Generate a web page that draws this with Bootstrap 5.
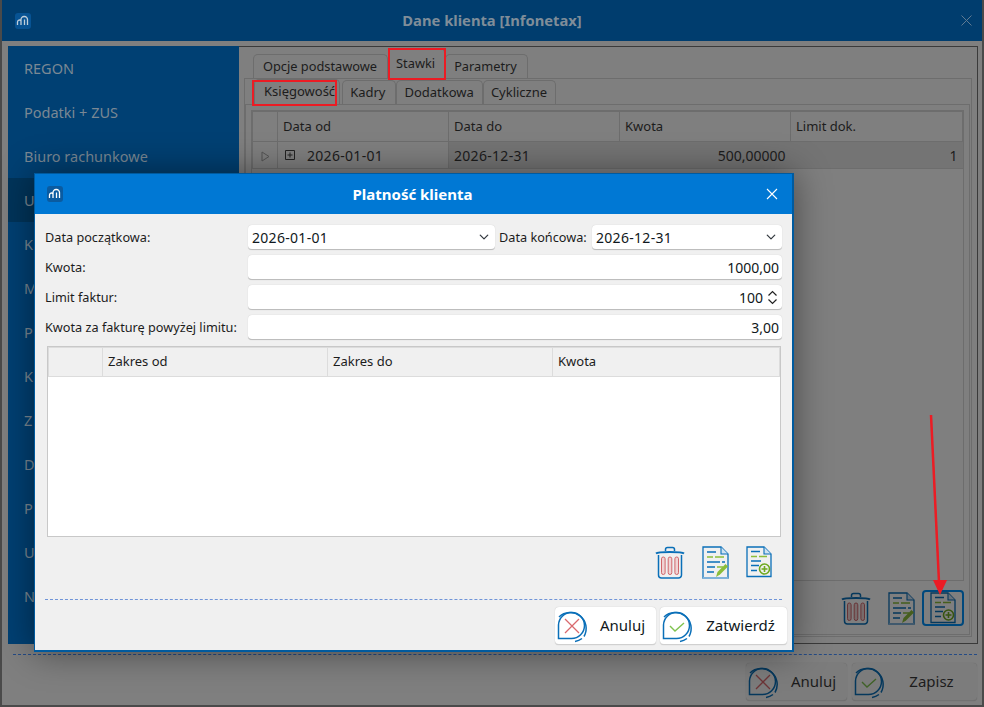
<!DOCTYPE html>
<html lang="pl">
<head>
    <meta charset="UTF-8">
    <meta name="viewport" content="width=device-width, initial-scale=1.0">
    <title>Dane klienta</title>
    <link href="https://cdn.jsdelivr.net/npm/bootstrap@5.3.0/dist/css/bootstrap.min.css" rel="stylesheet">
    <style>
        html, body { height: 100%; }
        body {
            background: #7f7f7f;
            font-family: "Noto Sans", "Open Sans", sans-serif;
            font-size: 13px;
            color: #101820;
            overflow: hidden;
        }
        .app-window {
            position: relative;
            width: 984px;
            height: 707px;
            border-left: 2px solid #4a4a4a;
            border-bottom: 2px solid #4a4a4a;
            border-right: 2px solid #4a4a4a;
            background: #7f7f7f;
            color: #1c1c1c;
        }
        .back-title {
            height: 41px;
            background: #003d6e;
            color: #7f8d99;
            font-size: 14.75px;
            font-weight: 700;
        }
        .logo-box {
            width: 16px;
            height: 16px;
            border-radius: 3px;
            background: #0a5ba0;
        }
        .back-main { height: 598px; margin: 5px 4px 0 6px; }
        .side-list { width: 231px; background: #004073; color: #7a8894; font-size: 14.5px; }
        .side-item { height: 44px; padding: 1px 0 0 16px; }
        .side-item.picked { background: #00345a; }
        .back-panel { flex: 1; border: 1px solid #3a3a3a; border-left: 0; padding: 0 5px 6px 5px; }
        .tab-row { padding-left: 9px; height: 31px; border: 0; align-items: flex-end; font-size: 12.8px; }
        .tab-row .nav-link {
            height: 24px;
            padding: 0 10px 0 9px;
            display: flex;
            align-items: center;
            color: #1c1c1c;
            background: #7f7f7f;
            border: 1px solid #6d6d6d;
            border-bottom: 0;
            border-radius: 5px 5px 0 0;
        }
        .tab-row .nav-link.active { height: 30px; padding: 0 9px 0 7px; margin-left: 0; background: #7f7f7f; color: #1c1c1c; }
        .tab-row .nav-link.next-tab { padding-left: 8px; }
        .tabs-outer { height: 559px; border: 1px solid #6d6d6d; padding: 0 1px 1px 0; }
        .tab-row.inner { height: 25px; padding-left: 9px; font-size: 13px; }
        .tab-row.inner .nav-link { height: 24px; padding: 0 8px 0 7px; }
        .tab-row.inner .nav-link.wider { padding-right: 10px; }
        .tab-row.inner .nav-link.active { height: 25px; padding: 0 4px 0 9px; margin: 0 2px 0 0; }
        .tabs-inner { height: 531px; border: 1px solid #6d6d6d; padding: 5px 5px 5px 5px; }
        .back-grid { height: 471px; border: 1px solid #6d6d6d; }
        .back-grid .table { --bs-table-bg: transparent; --bs-table-color: #1c1c1c; --bs-table-border-color: #6d6d6d; table-layout: fixed; margin: 0; font-size: 13px; }
        .back-grid th, .back-grid td { padding: 0 5px; border-color: #6d6d6d; font-weight: 400; vertical-align: middle; }
        .back-grid tr { border-color: #6d6d6d; }
        .back-grid thead th { border-top: 0; }
        .back-grid thead tr { height: 30px; }
        .back-grid tbody tr { height: 27px; }
        .back-grid tbody td { background: #747474; border-width: 0; font-size: 14px; }
        .back-grid tbody td.cur { background: #7f7f7f; border: 1px solid #6d6d6d; border-top: 0; }
        .date-val { letter-spacing: .3px; }
        .plus-box { margin-left: 2px; }
        .row-icons { height: 40px; gap: 17px; padding-right: 0; margin-top: 7px; }
        .picked-tool { width: 42px; height: 36px; margin-left: -10px; border: 2px solid #0090f8; border-radius: 4px; }
        .back-dash { border-top: 1px dashed #244b86; margin: 10px 5px 8px 11px; }
        .foot-btn {
            display: flex;
            align-items: center;
            height: 38px;
            padding: 0 0 0 2px;
            background: #fff;
            border: 0;
            border-bottom: 1px solid #d0d0d0;
            border-radius: 4px;
            color: #101820;
            font-size: 15px;
            box-shadow: 0 0 1px rgba(0, 0, 0, .25);
        }
        .foot-btn span { flex: 1; text-align: center; padding-right: 2px; }
        .foot-btn.dim { background: #7c7c7c; color: #1c1c1c; border-color: #727272; }
        .back-foot { gap: 5px; padding-right: 5px; }
        .dim-icon { filter: brightness(.5); }

        /* dialog over the dimmed window */
        .pay-dialog {
            position: absolute;
            left: 32px;
            top: 173px;
            width: 760px;
            height: 479px;
            background: #f0f0f0;
            border: 1px solid #005a9e;
            border-width: 1px 2px 2px 1px;
            box-shadow: 0 0 34px rgba(0, 0, 0, .45);
        }
        .pay-head { height: 40px; background: #0078d4; color: #fff; font-size: 15px; font-weight: 700; }
        .pay-form {
            display: grid;
            grid-template-columns: 203px 247px 97px 190px;
            row-gap: 5px;
            padding: 11px 0 0 10px;
            width: 747px;
            font-size: 12.7px;
        }
        .pay-form label { line-height: 25px; white-space: nowrap; }
        .field-ctl {
            height: 25px;
            min-height: 0;
            padding: 0 3px 0 4px;
            font-size: 14px;
            color: #101820;
            background-color: #fff;
            border: 0;
            border-bottom: 1px solid #bdbdbd;
            border-radius: 4px;
            font-family: inherit;
            box-shadow: 0 0 1px rgba(0, 0, 0, .2);
        }
        select.field-ctl { padding-right: 20px; background-position: right 5px center; background-size: 12px 10px; letter-spacing: .3px; }
        .wide-cell { grid-column: 2 / 5; }
        .lbl-end { padding-left: 4px; }
        .spin-cell { display: flex; align-items: center; padding-right: 4px; }
        .spin-cell input { flex: 1; min-width: 0; border: 0; outline: 0; background: transparent; text-align: right; font: inherit; color: inherit; padding-right: 4px; }
        .pay-grid { height: 191px; margin: 6px 11px 0 12px; background: #fff; border: 1px solid #c8c8c8; }
        .pay-grid .table { table-layout: fixed; margin: 0; font-size: 13px; --bs-table-border-color: #dcdcdc; }
        .pay-grid tr { border-color: #dcdcdc; }
        .pay-grid th { height: 29px; padding: 0 5px; font-weight: 400; background: #f0f0f0; border-top: 0; vertical-align: middle; color: #1c1c1c; }
        .pay-tools { height: 34px; gap: 17px; margin-top: 8px; padding-right: 20px; }
        .pay-dash { border-top: 1px dashed #6f94d8; margin: 20px 10px 7px 10px; }
        .pay-foot { gap: 4px; padding-right: 5px; }
    </style>
</head>
<body>
    <svg width="0" height="0" class="position-absolute">
        <defs>
            <symbol id="ic-logo" viewBox="0 0 16 16">
                <path d="M2.500 12V9a2 2 0 0 1 3.500-1.300M6 12V6.500A3 3 0 0 1 9 3.500h.500a3 3 0 0 1 3 3V12M9.500 12V6.500" fill="none" stroke="#fff" stroke-width="1.300"/>
            </symbol>
            <symbol id="ic-trash" viewBox="0 0 30 33">
                <path d="M10.500 5V3.500a2 2 0 0 1 2-2h5a2 2 0 0 1 2 2V5" fill="none" stroke="#0a6fb8" stroke-width="1.500"/>
                <path d="M1 7.500C3 5.500 27 5.500 29 7.500" fill="none" stroke="#0a6fb8" stroke-width="1.800"/>
                <path d="M3.500 9v20a3 3 0 0 0 3 3h17a3 3 0 0 0 3-3V9" fill="none" stroke="#0a6fb8" stroke-width="1.500"/>
                <g fill="#f0d4d4" stroke="#d0666b" stroke-width="1">
                    <rect x="6.500" y="11" width="3.600" height="17.500" rx="1.800"/>
                    <rect x="13.200" y="11" width="3.600" height="17.500" rx="1.800"/>
                    <rect x="19.900" y="11" width="3.600" height="17.500" rx="1.800"/>
                </g>
            </symbol>
            <symbol id="ic-docedit" viewBox="0 0 27 33">
                <path d="M1 1h18l7 7v24H1z" fill="none" stroke="#0a6fb8" stroke-width="1.300"/>
                <path d="M19 1v7h7" fill="#cfe2f2" stroke="#0a6fb8" stroke-width="1.100"/>
                <path d="M5 6h9M5 16h13M20 16h3M5 21h8M5 26h7" stroke="#0a6fb8" stroke-width="1.300"/>
                <path d="M5 11h6M13 11h9M15 21h6" stroke="#8bbd3a" stroke-width="1.300"/>
                <path d="M14 31l1.500-5L23.500 18l2.500 2.500-8 8z" fill="#8bbd3a"/>
                <path d="M1 32h25" stroke="#7fb2da" stroke-width="2"/>
            </symbol>
            <symbol id="ic-docadd" viewBox="0 0 26 32">
                <path d="M1 1h17l7 7v22.500H1z" fill="none" stroke="#0a6fb8" stroke-width="1.300"/>
                <path d="M18 1v7h7" fill="#cfe2f2" stroke="#0a6fb8" stroke-width="1.100"/>
                <path d="M5 5.500h9M5 15h10M5 19.500h8M5 24.500h6" stroke="#0a6fb8" stroke-width="1.300"/>
                <path d="M5 10.500h6M13 10.500h8" stroke="#8bbd3a" stroke-width="1.300"/>
                <circle cx="18.500" cy="23" r="5" fill="none" stroke="#6ea91f" stroke-width="1.600"/>
                <path d="M18.500 20v6M15.500 23h6" stroke="#6ea91f" stroke-width="1.600"/>
            </symbol>
            <symbol id="ic-cancel" viewBox="2 0 34 34">
                <path d="M3.500 29.500V16A13 13 0 1 1 16.500 29.500z" fill="none" stroke="#0a6fb8" stroke-width="1.500"/>
                <path d="M4 8A16 16 0 0 1 29 27.500M27 29.500a16 16 0 0 1-7 3" fill="none" stroke="#0a6fb8" stroke-width="1.500"/>
                <path d="M10 10l14 14M24 10L10 24" stroke="#d9696d" stroke-width="1.300"/>
            </symbol>
            <symbol id="ic-ok" viewBox="2 0 34 34">
                <path d="M3.500 29.500V16A13 13 0 1 1 16.500 29.500z" fill="none" stroke="#0a6fb8" stroke-width="1.500"/>
                <path d="M4 8A16 16 0 0 1 29 27.500M27 29.500a16 16 0 0 1-7 3" fill="none" stroke="#0a6fb8" stroke-width="1.500"/>
                <path d="M10 17l5 5 9-8" fill="none" stroke="#7fc24f" stroke-width="1.400"/>
            </symbol>
        </defs>
    </svg>

    <div class="app-window">
        <!-- Okno w tle -->
        <div class="back-title d-flex align-items-center position-relative">
            <div class="logo-box opacity-75 d-flex" style="margin-left:13px"><svg width="16" height="16"><use href="#ic-logo"/></svg></div>
            <div class="flex-grow-1 text-center" style="margin-right:8px">Dane klienta [Infonetax]</div>
            <svg style="margin-right:10px" width="11" height="11" viewBox="0 0 11 11"><path d="M.5.5l10 10M10.500.5l-10 10" stroke="#5f7a92" stroke-width="1"/></svg>
        </div>

        <div class="back-main d-flex">
            <div class="side-list d-flex flex-column">
                <div class="side-item d-flex align-items-center">REGON</div>
                <div class="side-item d-flex align-items-center">Podatki + ZUS</div>
                <div class="side-item d-flex align-items-center">Biuro rachunkowe</div>
                <div class="side-item picked d-flex align-items-center">U</div>
                <div class="side-item d-flex align-items-center">K</div>
                <div class="side-item d-flex align-items-center">M</div>
                <div class="side-item d-flex align-items-center">P</div>
                <div class="side-item d-flex align-items-center">K</div>
                <div class="side-item d-flex align-items-center">Z</div>
                <div class="side-item d-flex align-items-center">D</div>
                <div class="side-item d-flex align-items-center">P</div>
                <div class="side-item d-flex align-items-center">U</div>
                <div class="side-item d-flex align-items-center">N</div>
            </div>
            <div class="back-panel">
                <ul class="nav tab-row">
                    <li class="nav-item"><a class="nav-link" href="#">Opcje podstawowe</a></li>
                    <li class="nav-item"><a class="nav-link active" href="#">Stawki</a></li>
                    <li class="nav-item"><a class="nav-link next-tab" href="#">Parametry</a></li>
                </ul>
                <div class="tabs-outer">
                    <ul class="nav tab-row inner">
                        <li class="nav-item"><a class="nav-link active" href="#">Księgowość</a></li>
                        <li class="nav-item"><a class="nav-link wider" href="#">Kadry</a></li>
                        <li class="nav-item"><a class="nav-link" href="#">Dodatkowa</a></li>
                        <li class="nav-item"><a class="nav-link" href="#">Cykliczne</a></li>
                    </ul>
                    <div class="tabs-inner">
                        <div class="back-grid">
                            <table class="table table-bordered">
                                <colgroup><col style="width:25px"><col style="width:171px"><col style="width:171px"><col style="width:171px"><col></colgroup>
                                <thead>
                                    <tr><th></th><th>Data od</th><th>Data do</th><th>Kwota</th><th>Limit dok.</th></tr>
                                </thead>
                                <tbody>
                                    <tr>
                                        <td class="cur text-center"><svg width="9" height="11" viewBox="0 0 9 11"><path d="M1 1l7 4.500L1 10z" fill="none" stroke="#555"/></svg></td>
                                        <td class="cur">
                                            <div class="d-flex align-items-center gap-2">
                                                <svg class="plus-box" width="10" height="10" viewBox="0 0 10 10"><path d="M.5.5h9v9h-9zM2.500 5h5M5 2.500v5" fill="none" stroke="#222"/></svg>
                                                <span class="ms-1 date-val">2026-01-01</span>
                                            </div>
                                        </td>
                                        <td class="date-val">2026-12-31</td>
                                        <td class="text-end">500,00000</td>
                                        <td class="text-end">1</td>
                                    </tr>
                                </tbody>
                            </table>
                        </div>
                        <div class="row-icons d-flex justify-content-end align-items-center dim-icon">
                            <svg width="30" height="33"><use href="#ic-trash"/></svg>
                            <svg width="27" height="33"><use href="#ic-docedit"/></svg>
                            <div class="picked-tool d-flex justify-content-center align-items-center">
                                <svg width="26" height="32"><use href="#ic-docadd"/></svg>
                            </div>
                        </div>
                    </div>
                </div>
            </div>
        </div>

        <div class="back-dash"></div>
        <div class="back-foot d-flex justify-content-end">
            <button type="button" class="btn foot-btn dim" style="width:101px"><svg class="dim-icon" width="34" height="34"><use href="#ic-cancel"/></svg><span>Anuluj</span></button>
            <button type="button" class="btn foot-btn dim" style="width:125px"><svg class="dim-icon" width="34" height="34"><use href="#ic-ok"/></svg><span>Zapisz</span></button>
        </div>

        <!-- Czerwone ramki i strzałka -->
        <svg class="position-absolute top-0 start-0" width="984" height="705" style="margin-left:-2px">
            <g fill="none" stroke="#ec1c24" stroke-width="2">
                <rect x="389" y="49" width="56" height="30"/>
                <rect x="253" y="81" width="83" height="24"/>
            </g>
            <path d="M931 415l8 167" stroke="#ec1c24" stroke-width="2.500"/>
            <path d="M933 580h14l-7 15z" fill="#ec1c24"/>
        </svg>

        <!-- Okno dialogowe -->
        <div class="pay-dialog d-flex flex-column">
            <div class="pay-head d-flex align-items-center">
                <div class="logo-box d-flex" style="margin-left:12px"><svg width="16" height="16"><use href="#ic-logo"/></svg></div>
                <div class="flex-grow-1 text-center" style="margin-right:4px">Platność klienta</div>
                <svg style="margin-right:14px" width="12" height="12" viewBox="0 0 12 12"><path d="M1 1l10 10M11 1L1 11" stroke="#fff" stroke-width="1.100"/></svg>
            </div>
            <form class="pay-form">
                <label>Data początkowa:</label>
                <select class="form-select field-ctl"><option>2026-01-01</option></select>
                <label class="lbl-end">Data końcowa:</label>
                <select class="form-select field-ctl"><option>2026-12-31</option></select>

                <label>Kwota:</label>
                <input class="form-control field-ctl wide-cell text-end" value="1000,00">

                <label>Limit faktur:</label>
                <div class="field-ctl wide-cell spin-cell">
                    <input value="100">
                    <svg width="11" height="15" viewBox="0 0 11 15"><path d="M1.500 5.500l4-4 4 4M1.500 9.500l4 4 4-4" fill="none" stroke="#222" stroke-width="1.200"/></svg>
                </div>

                <label>Kwota za fakturę powyżej limitu:</label>
                <input class="form-control field-ctl wide-cell text-end" value="3,00">
            </form>
            <div class="pay-grid">
                <table class="table table-bordered">
                    <colgroup><col style="width:54px"><col style="width:225px"><col style="width:225px"><col></colgroup>
                    <thead>
                        <tr><th></th><th>Zakres od</th><th>Zakres do</th><th>Kwota</th></tr>
                    </thead>
                </table>
            </div>
            <div class="pay-tools d-flex justify-content-end align-items-center">
                <svg width="30" height="33"><use href="#ic-trash"/></svg>
                <svg width="27" height="33"><use href="#ic-docedit"/></svg>
                <svg width="26" height="32"><use href="#ic-docadd"/></svg>
            </div>
            <div class="pay-dash"></div>
            <div class="pay-foot d-flex justify-content-end">
                <button type="button" class="btn foot-btn" style="width:101px"><svg width="34" height="34"><use href="#ic-cancel"/></svg><span>Anuluj</span></button>
                <button type="button" class="btn foot-btn" style="width:127px"><svg width="34" height="34"><use href="#ic-ok"/></svg><span>Zatwierdź</span></button>
            </div>
        </div>
    </div>

    <script src="https://cdn.jsdelivr.net/npm/bootstrap@5.3.0/dist/js/bootstrap.bundle.min.js"></script>
</body>
</html>
